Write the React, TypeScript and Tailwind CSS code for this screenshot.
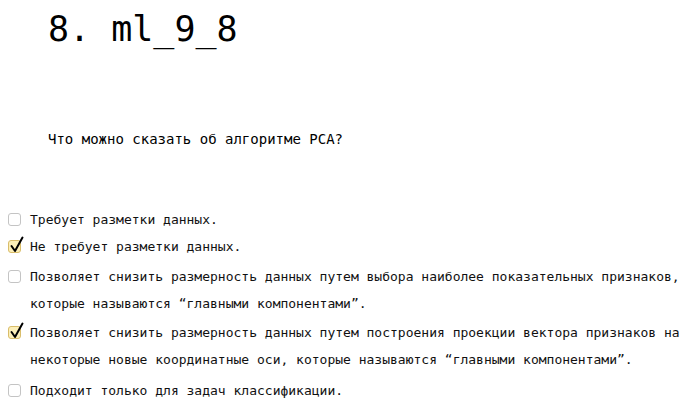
const OPTIONS = [
  { text: 'Требует разметки данных.', checked: false, mt: 'mt-0' },
  { text: 'Не требует разметки данных.', checked: true, mt: 'mt-0' },
  {
    text: 'Позволяет снизить размерность данных путем выбора наиболее показательных признаков, которые называются “главными компонентами”.',
    checked: false,
    mt: 'mt-[3px]',
  },
  {
    text: 'Позволяет снизить размерность данных путем построения проекции вектора признаков на некоторые новые координатные оси, которые называются “главными компонентами”.',
    checked: true,
    mt: 'mt-[2px]',
  },
  { text: 'Подходит только для задач классификации.', checked: false, mt: 'mt-[4px]' },
];

function Box({ checked }: { checked: boolean }) {
  if (!checked) {
    return <div className="w-[13px] h-[13px] mt-[7px] rounded-[3px] border border-[#c4c4c4] bg-white flex-shrink-0" />;
  }
  return (
    <div className="relative w-[13px] h-[13px] mt-[7px] rounded-[3px] border border-[#d9bd6a] bg-[#fcefb8] flex-shrink-0">
      <svg
        className="absolute left-[1px] -top-[5px]"
        width="14"
        height="17"
        viewBox="0 0 14 17"
        fill="none"
      >
        <path d="M1.5 10 L5 15 L12.5 1.5" stroke="#000" strokeWidth="2" strokeLinecap="round" strokeLinejoin="round" />
      </svg>
    </div>
  );
}

export default function App() {
  return (
    <div className="w-[698px] h-[415px] bg-white text-black overflow-hidden" style={{ fontFamily: '"DejaVu Sans Mono", monospace' }}>
      <h1 className="pl-[48px] pt-[12px] text-[35px] leading-none font-normal">8. ml_9_8</h1>

      <p className="pl-[48px] mt-[83px] text-[14px] leading-[18px]">Что можно сказать об алгоритме PCA?</p>

      <div className="mt-[58px] pl-[8px] pr-[10px]">
        {OPTIONS.map((o, i) => (
          <div key={i} className={`flex items-start gap-[9px] ${o.mt}`}>
            <Box checked={o.checked} />
            <span className="text-[13px] leading-[27px] text-[#111]">{o.text}</span>
          </div>
        ))}
      </div>
    </div>
  );
}
